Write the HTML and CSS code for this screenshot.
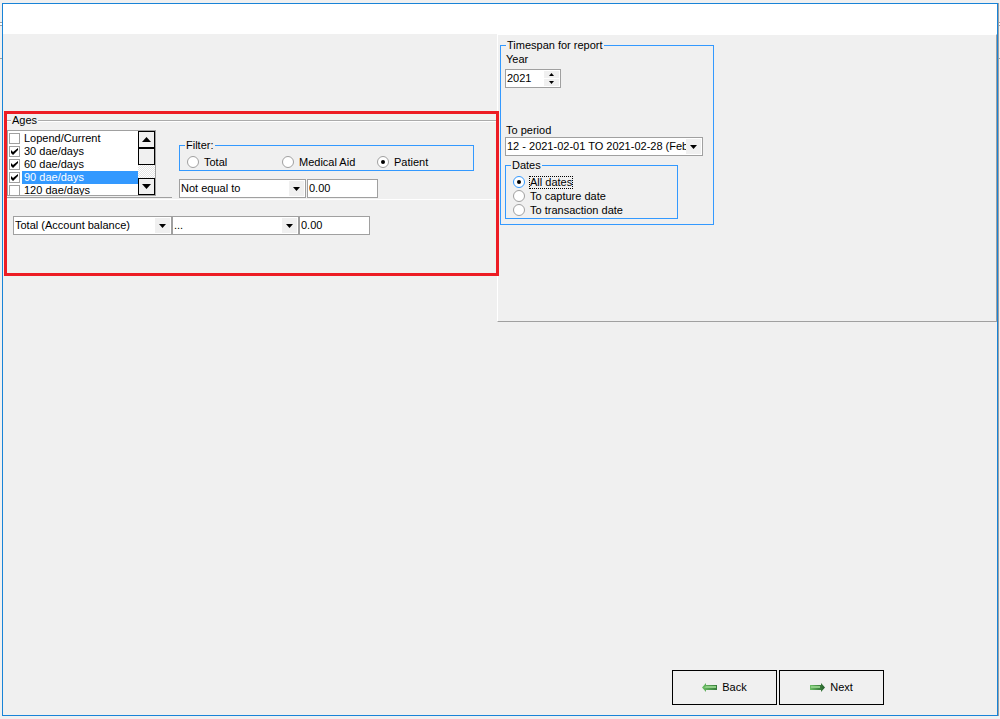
FILE: index.html
```html
<!DOCTYPE html>
<html lang="en">
<head>
  <meta charset="UTF-8">
  <meta name="viewport" content="width=device-width, initial-scale=1.0">
  <title>Age Analysis Report</title>
  <link rel="stylesheet" href="styles.css">
</head>
<body>
  <form class="window">
    <header class="banner"></header>

    <main class="content">
      <div class="left">
        <div class="highlight">
          <fieldset class="ages">
            <legend>Ages</legend>
            <div class="ages-row">
              <div class="list-col">
                <div class="list">
                  <div class="items">
                    <label><input type="checkbox"><span>Lopend/Current</span></label>
                    <label><input type="checkbox" checked><span>30 dae/days</span></label>
                    <label><input type="checkbox" checked><span>60 dae/days</span></label>
                    <label class="selected"><input type="checkbox" checked><span>90 dae/days</span></label>
                    <label><input type="checkbox"><span>120 dae/days</span></label>
                  </div>
                  <div class="scrollbar">
                    <button type="button" aria-label="Scroll up"><i class="tri up"></i></button>
                    <div class="thumb"></div>
                    <button type="button" class="down" aria-label="Scroll down"><i class="tri"></i></button>
                  </div>
                </div>
              </div>

              <div class="filter-col">
                <fieldset class="box filter">
                  <legend>Filter:</legend>
                  <label><input type="radio" name="filter"><span>Total</span></label>
                  <label><input type="radio" name="filter"><span>Medical Aid</span></label>
                  <label><input type="radio" name="filter" checked><span>Patient</span></label>
                </fieldset>
                <div class="compare">
                  <div class="combo operator">
                    <select aria-label="Age comparison"><option>Not equal to</option></select>
                  </div>
                  <input class="amount" type="text" value="0.00" aria-label="Age amount">
                </div>
              </div>
            </div>
          </fieldset>

          <div class="totals">
            <div class="combo field">
              <select aria-label="Total field"><option>Total (Account balance)</option></select>
            </div>
            <div class="combo operator">
              <select aria-label="Total comparison"><option>...</option></select>
            </div>
            <input class="amount" type="text" value="0.00" aria-label="Total amount">
          </div>
        </div>
      </div>

      <div class="right">
        <fieldset class="box timespan">
          <legend>Timespan for report</legend>
          <label class="caption" for="year">Year</label>
          <div class="spinner">
            <input id="year" type="number" value="2021">
            <div class="steps">
              <button type="button" aria-label="Next year"><i class="tri up"></i></button>
              <button type="button" aria-label="Previous year"><i class="tri"></i></button>
            </div>
          </div>
          <label class="caption" for="period">To period</label>
          <div class="combo period">
            <select id="period"><option>12 - 2021-02-01 TO 2021-02-28 (Febr</option></select>
          </div>
          <fieldset class="box dates">
            <legend>Dates</legend>
            <label class="focused"><input type="radio" name="dates" checked><span>All dates</span></label>
            <label><input type="radio" name="dates"><span>To capture date</span></label>
            <label><input type="radio" name="dates"><span>To transaction date</span></label>
          </fieldset>
        </fieldset>
      </div>
    </main>

    <footer class="actions">
      <button type="button">
        <svg width="15" height="9" viewBox="0 0 15 9">
          <defs>
            <linearGradient id="green-left">
              <stop offset="0" stop-color="#6cc065"/>
              <stop offset="1" stop-color="#357a3a"/>
            </linearGradient>
          </defs>
          <path d="M0 4.5L4 0V2H15V7H4V9Z" fill="url(#green-left)"/>
          <path d="M2 4.5L4 3H14V5H4Z" fill="#8fcf86"/>
        </svg>
        Back
      </button>
      <button type="button">
        <svg width="15" height="9" viewBox="0 0 15 9">
          <defs>
            <linearGradient id="green-right">
              <stop offset="0" stop-color="#6cc065"/>
              <stop offset="1" stop-color="#235c29"/>
            </linearGradient>
          </defs>
          <path d="M15 4.5L11 0V2H0V7H11V9Z" fill="url(#green-right)"/>
          <path d="M1 3H10V5H1Z" fill="#8fcf86"/>
        </svg>
        Next
      </button>
    </footer>
  </form>
</body>
</html>
```
FILE: styles.css
```css
* {
  box-sizing: border-box;
}

body {
  margin: 0;
  padding: 3px 2px;
  min-height: 100vh;
  display: flex;
  /* edges of the window behind this one */
  background:
    linear-gradient(#a0a0a0, #a0a0a0) 0 22px / 100% 1px no-repeat,
    linear-gradient(#fff, #fff) 0 23px / 100% 2px no-repeat,
    linear-gradient(#a0a0a0, #a0a0a0) 0 25px / 100% 1px no-repeat,
    linear-gradient(#a0a0a0, #a0a0a0) 0 58px / 100% 1px no-repeat,
    #f0f0f0;
}

body, button, input, select {
  font-family: "Liberation Sans", Arial, sans-serif;
  font-size: 11px;
  line-height: 13px;
  color: #000;
}

button, input, select {
  margin: 0;
  padding: 0;
  border: 0;
  border-radius: 0;
  appearance: none;
  outline: none;
}

.window {
  flex: 1;
  display: flex;
  flex-direction: column;
  border: 1px solid #1883d7;
  box-shadow: 1px 0 #a0a0a0;
  background: #f0f0f0;
}

.banner {
  height: 30px;
  background: #fff;
}

.content {
  flex: 1;
  display: grid;
  grid-template-columns: 494px minmax(0, 1fr);
  align-items: start;
}

/* Ages */
.left {
  padding: 77px 0 0 1px;
}

.highlight {
  position: relative;
  z-index: 1;
  height: 165px;
  margin-right: -2px;
  border: 3px solid #ed1c24;
}

fieldset {
  margin: 0;
  padding: 0;
  border: 0;
  min-width: 0;
}

legend {
  padding: 0 1px;
}

.ages {
  border-top: 2px groove #fff;
  border-bottom: 1px solid #fff;
}

.ages > legend {
  margin-left: 4px;
}

.ages-row {
  display: flex;
}

.list-col {
  width: 165px;
  margin-bottom: 1px;
  padding: 3px 0 1px;
  border-bottom: 1px solid #a0a0a0;
}

.list {
  display: flex;
  width: 149px;
  height: 66px;
  border: 1px solid #a0a0a0;
  background: #fff;
  overflow: hidden;
}

.items {
  flex: 1;
  padding-top: 1px;
}

.items label {
  display: flex;
  align-items: center;
  gap: 2px;
  height: 13px;
  padding-left: 1px;
}

.items span {
  flex: 1;
  padding-left: 2px;
}

.items .selected span {
  background: #3399ff;
  color: #fff;
}

input[type="checkbox"] {
  width: 11px;
  height: 11px;
  border: 1px solid #a0a0a0;
  background: #fff;
}

input[type="checkbox"]:checked::before {
  content: '';
  display: block;
  width: 9px;
  height: 9px;
  background: #000;
  clip-path: polygon(1px 3px, 3px 5px, 8px 1px, 8px 3px, 3px 8px, 1px 6px);
}

.scrollbar {
  display: flex;
  flex-direction: column;
  width: 17px;
  background: repeating-conic-gradient(#fff 0 25%, #e4e4e4 0 50%) 0 0 / 2px 2px;
}

.scrollbar button,
.thumb {
  display: flex;
  align-items: center;
  justify-content: center;
  height: 17px;
  border: 1px solid #000;
  background: #f0f0f0;
}

.scrollbar .down {
  margin-top: auto;
}

.tri {
  width: 7px;
  height: 4px;
  background: #000;
  clip-path: polygon(0 0, 100% 0, 50% 100%);
}

.tri.up {
  clip-path: polygon(50% 0, 100% 100%, 0 100%);
}

.scrollbar .tri {
  width: 9px;
  height: 5px;
}

.filter-col {
  padding: 12px 0 0 7px;
}

.box {
  border: 1px solid #3399ff;
}

.box label:not(.caption) {
  display: flex;
  align-items: center;
  gap: 4px;
  height: 14px;
}

.box label span {
  padding: 0 1px;
}

.filter {
  display: flex;
  width: 295px;
  height: 32px;
  padding: 3px 0 0 7px;
}

.filter label {
  width: 95px;
}

/* pull the caption left of the radio column */
.filter > legend,
.dates > legend {
  margin-left: -2px;
}

input[type="radio"] {
  display: grid;
  place-items: center;
  width: 12px;
  height: 12px;
  border: 1px solid #a0a0a0;
  border-radius: 50%;
  background: #fff;
}

input[type="radio"]:checked::before {
  content: '';
  width: 4px;
  height: 4px;
  border-radius: 50%;
  background: #000;
}

.focused input[type="radio"] {
  border-color: #3399ff;
}

.focused span {
  outline: 1px dotted #000;
  outline-offset: -1px;
}

.compare {
  display: flex;
  gap: 1px;
  margin-top: 8px;
}

.totals {
  display: flex;
  padding: 16px 0 0 6px;
}

.combo {
  position: relative;
  height: 19px;
  border: 1px solid #a0a0a0;
  background: #fff;
}

.combo select {
  display: block;
  width: 100%;
  height: 17px;
  padding: 0 10px 0 1px;
  background: transparent;
}

.combo::before {
  content: '';
  position: absolute;
  top: 1px;
  right: 1px;
  width: 15px;
  height: 15px;
  background: #f0f0f0;
  pointer-events: none;
}

.combo::after {
  content: '';
  position: absolute;
  top: 7px;
  right: 5px;
  width: 7px;
  height: 4px;
  background: #000;
  clip-path: polygon(0 0, 100% 0, 50% 100%);
  pointer-events: none;
}

.operator {
  width: 127px;
}

.field {
  width: 159px;
}

.amount {
  width: 71px;
  height: 19px;
  padding: 0 1px 1px;
  border: 1px solid #a0a0a0;
  background: #fff;
}

/* Timespan */
.right {
  height: 288px;
  padding: 4px 0 0 2px;
  border: 1px solid #a0a0a0;
  border-top-color: #fff;
  border-left-color: #fff;
}

.timespan {
  width: 214px;
  height: 186px;
  padding: 1px 4px 0;
}

.timespan > legend {
  margin-left: 1px;
}

.caption {
  display: block;
  padding-left: 1px;
}

.spinner {
  display: flex;
  width: 56px;
  height: 19px;
  margin: 3px 0 36px;
  border: 1px solid #a0a0a0;
  background: #fff;
}

.spinner input {
  flex: 1;
  min-width: 0;
  padding-left: 1px;
  background: transparent;
  appearance: textfield;
}

.spinner input::-webkit-inner-spin-button {
  display: none;
}

.steps {
  display: grid;
  gap: 1px;
  width: 16px;
  padding: 1px 1px 1px 0;
}

.steps button {
  display: flex;
  align-items: center;
  justify-content: center;
  background: #f0f0f0;
}

.steps .tri {
  width: 5px;
  height: 3px;
}

.period {
  width: 198px;
}

.dates {
  width: 173px;
  height: 60px;
  margin-top: 3px;
  padding: 3px 0 0 7px;
}

/* Back / Next */
.actions {
  display: flex;
  justify-content: flex-end;
  gap: 2px;
  padding: 0 113px 10px 0;
}

.actions button {
  display: flex;
  align-items: center;
  justify-content: center;
  gap: 5px;
  width: 105px;
  height: 35px;
  border: 1px solid #000;
  background: #f0f0f0;
}
```
